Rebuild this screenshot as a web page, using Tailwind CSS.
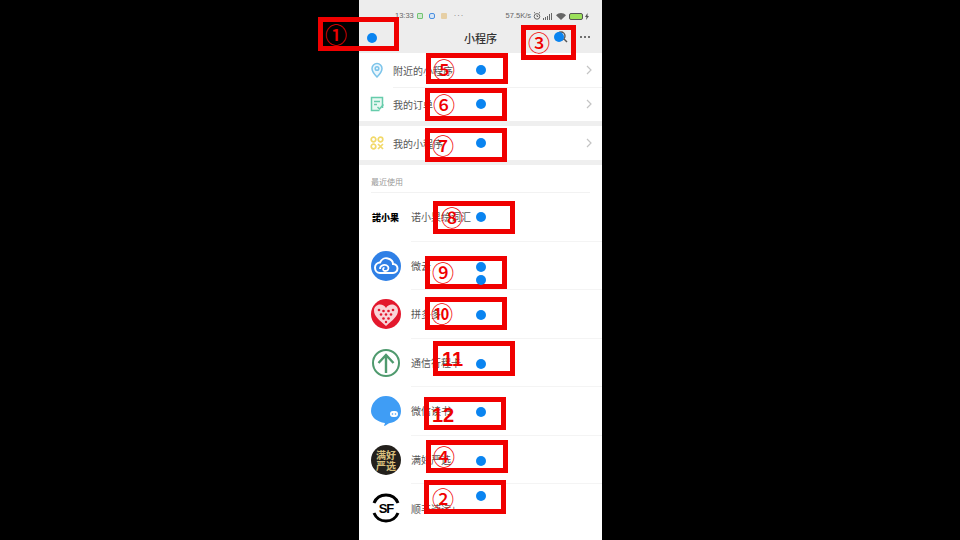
<!DOCTYPE html>
<html lang="en">
<head>
  <meta charset="UTF-8">
  <title>小程序</title>
  <script src="https://cdn.jsdelivr.net/npm/@tailwindcss/browser@4"></script>
</head>
<body class="relative w-[960px] h-[540px] overflow-hidden bg-black font-['Noto_Sans_CJK_SC',sans-serif]">

  <!-- Phone -->
  <div class="ml-[359px] w-[243px] h-[540px] bg-white flex flex-col text-[10px] text-[#555555] overflow-hidden">

    <!-- Status bar + title -->
    <div class="h-[53px] shrink-0 bg-[#ededed] flex flex-col">
      <div class="h-[25px] pl-[36px] pr-[13px] pt-[7px] flex items-center justify-between text-[7.500px] text-[#666666] font-['Liberation_Sans',sans-serif]">
        <div class="flex items-center gap-[3px]">
          <span>13:33</span>
          <span class="w-[6px] h-[6px] rounded-[1px] border-[1.500px] border-[#72c472] bg-[#cfe8cf]"></span>
          <span class="w-[6px] h-[6px] ml-[3px] rounded-[2px] border-[1.500px] border-[#4a8fe0] bg-[#d5e4f5]"></span>
          <span class="w-[6px] h-[6px] ml-[3px] rounded-[1px] bg-[#e6cfa5]"></span>
          <span class="ml-[4px] tracking-[1px]">···</span>
        </div>
        <div class="flex items-center gap-[2px]">
          <span>57.5K/s</span>
          <svg width="8" height="8" viewBox="0 0 8 8" fill="none" stroke="#666" stroke-width="1"><circle cx="4" cy="4.400" r="2.800"/><path d="M1 1 2 .4M7 1 6 .4M4 3v1.500h1.200"/></svg>
          <svg width="10" height="7" viewBox="0 0 10 7" fill="#666"><path d="M0 5h1v2H0zM2 4h1v3H2zM4 3h1v4H4zM6 1h1v6H6zM8 0h1v7H8z"/></svg>
          <svg class="ml-[1px]" width="10" height="7" viewBox="0 0 10 7" fill="#666"><path d="M0 2.200C3 -.6 7 -.6 10 2.200L5 7z"/></svg>
          <div class="ml-[1px] w-[14px] h-[7px] rounded-[2px] border border-[#555555] bg-[#9be05a]"></div>
          <svg width="4" height="7" viewBox="0 0 4 7" fill="#555"><path d="M2.500 0 0 4h1.500L1 7l3-4H2.500z"/></svg>
        </div>
      </div>
      <div class="relative flex-1 flex items-center justify-center pb-[2px] text-[11px] text-[#333333] font-medium">
        小程序
        <svg class="absolute left-[194px] top-[4px]" width="16" height="16" viewBox="0 0 16 16" fill="none" stroke="#555" stroke-width="1.400"><circle cx="8" cy="7" r="4"/><path d="m11 10 3 3"/></svg>
        <div class="absolute right-[12px] top-[11px] flex gap-[2px]">
          <span class="w-[2px] h-[2px] rounded-full bg-[#444444]"></span>
          <span class="w-[2px] h-[2px] rounded-full bg-[#444444]"></span>
          <span class="w-[2px] h-[2px] rounded-full bg-[#444444]"></span>
        </div>
      </div>
    </div>

    <!-- Menu -->
    <div class="h-[34px] shrink-0 pl-[11px] pr-[10px] flex items-center">
      <svg class="w-[14px] h-[16px] mr-[9px]" viewBox="0 0 14 16" fill="#eaf6fd" stroke="#7cc4ea" stroke-width="1.500"><path d="M7 15C4 12 2 9.500 2 6.500a5 5 0 0 1 10 0C12 9.500 10 12 7 15z"/><circle cx="7" cy="6.500" r="1.800"/></svg>
      <span class="flex-1">附近的小程序</span>
      <svg width="6" height="10" viewBox="0 0 6 10" fill="none" stroke="#c4c4c4" stroke-width="1.200"><path d="m1 1 4 4-4 4"/></svg>
    </div>
    <div class="h-[34px] shrink-0 pl-[11px] pr-[10px] flex items-center relative">
      <div class="absolute left-[34px] right-0 top-0 border-t border-[#f2f2f2]"></div>
      <svg class="w-[14px] h-[16px] mr-[9px]" viewBox="0 0 14 16" fill="#e9f8f2" stroke="#66ccab" stroke-width="1.500"><path d="M12.500 12V1.500h-11v13h8"/><path d="M4 5.500h6M4 8.500h3M7.500 11l2 2L13.500 8.500" fill="none"/></svg>
      <span class="flex-1">我的订单</span>
      <svg width="6" height="10" viewBox="0 0 6 10" fill="none" stroke="#c4c4c4" stroke-width="1.200"><path d="m1 1 4 4-4 4"/></svg>
    </div>
    <div class="h-[5px] shrink-0 bg-[#efefef]"></div>
    <div class="h-[34px] shrink-0 pl-[11px] pr-[10px] flex items-center">
      <svg class="w-[14px] h-[14px] mr-[9px]" viewBox="0 0 14 14" fill="none" stroke="#f2d96a" stroke-width="1.700"><circle cx="3.500" cy="3.500" r="2.300"/><circle cx="10.500" cy="3.500" r="2.300"/><circle cx="3.500" cy="10.500" r="2.300"/><path d="m8 8 5 5M13 8l-5 5"/></svg>
      <span class="flex-1">我的小程序</span>
      <svg width="6" height="10" viewBox="0 0 6 10" fill="none" stroke="#c4c4c4" stroke-width="1.200"><path d="m1 1 4 4-4 4"/></svg>
    </div>
    <div class="h-[5px] shrink-0 bg-[#efefef]"></div>

    <!-- Recent -->
    <div class="h-[28px] shrink-0 mx-[12px] pb-[4px] flex items-end text-[8px] text-[#999999] border-b border-[#f2f2f2]">最近使用</div>

    <div class="h-[48.500px] shrink-0 pl-[12px] flex items-center">
      <div class="w-[30px] mr-[10px] pl-[1px] text-[9px] leading-none font-black text-black whitespace-nowrap">諾小果</div>
      <span class="flex-1 h-full flex items-center border-b border-[#f4f4f4]">诺小果绘词汇</span>
    </div>
    <div class="h-[48.500px] shrink-0 pl-[12px] flex items-center">
      <svg class="mr-[10px]" width="30" height="30" viewBox="0 0 30 30"><circle cx="15" cy="15" r="15" fill="#2f80e6"/><path d="M9 22c-3 0-5-2.500-5-5.500S6.500 11.500 9 11.500C10.500 8 14 6.500 17 7.500c3 .8 5 3 5 5.500 3 0 4.500 2.200 4.500 4.500S24.500 22 22 22z" fill="none" stroke="#fff" stroke-width="2"/><path d="M9 18c0-4 5.500-5.500 8-2.500 1.500 2.500-.5 4.500-3 4.500-2 0-3-2.500-.5-3.500" fill="none" stroke="#fff" stroke-width="1.800"/></svg>
      <span class="flex-1 h-full flex items-center border-b border-[#f4f4f4]">微云</span>
    </div>
    <div class="h-[48.500px] shrink-0 pl-[12px] flex items-center">
      <svg class="mr-[10px]" width="30" height="30" viewBox="0 0 30 30"><circle cx="15" cy="15" r="15" fill="#e3182d"/><path d="M15 27C8 21 3 17 3 11.500 3 8 6 5.500 9 5.500c2.500 0 5 1.500 6 3.500 1-2 3.500-3.500 6-3.500 3 0 6 2.500 6 6C27 17 22 21 15 27z" fill="#f9d5d9"/><g fill="#e3182d"><circle cx="8" cy="11" r="1.300"/><circle cx="12.500" cy="12" r="1.300"/><circle cx="17.500" cy="12" r="1.300"/><circle cx="22" cy="11" r="1.300"/><circle cx="10" cy="15.500" r="1.300"/><circle cx="15" cy="15.500" r="1.300"/><circle cx="20" cy="15.500" r="1.300"/><circle cx="12.500" cy="19.500" r="1.300"/><circle cx="17.500" cy="19.500" r="1.300"/><circle cx="15" cy="23" r="1.200"/></g></svg>
      <span class="flex-1 h-full flex items-center border-b border-[#f4f4f4]">拼多多</span>
    </div>
    <div class="h-[48.500px] shrink-0 pl-[12px] flex items-center">
      <svg class="mr-[10px]" width="30" height="30" viewBox="0 0 30 30" fill="none" stroke="#4f9a6e" stroke-width="2"><circle cx="15" cy="15" r="13"/><path d="M15 25V7M7.500 15 15 7l7.500 8" stroke-width="2.400"/></svg>
      <span class="flex-1 h-full flex items-center border-b border-[#f4f4f4]">通信行程卡</span>
    </div>
    <div class="h-[48.500px] shrink-0 pl-[12px] flex items-center">
      <svg class="mr-[10px]" width="30" height="30" viewBox="0 0 30 30"><path d="M15 0a15 15 0 0 1 15 15c0 7-5 11-11 12-2 .500-4 2.500-6 3l1-3C6 26 0 21 0 15A15 15 0 0 1 15 0z" fill="#3f9df5"/><rect x="19" y="15" width="8" height="6" rx="3" fill="#fff"/><circle cx="21.500" cy="18" r=".8" fill="#3f9df5"/><circle cx="24.500" cy="18" r=".8" fill="#3f9df5"/></svg>
      <span class="flex-1 h-full flex items-center border-b border-[#f4f4f4]">微信读书</span>
    </div>
    <div class="h-[48.500px] shrink-0 pl-[12px] flex items-center">
      <div class="w-[30px] h-[30px] mr-[10px] shrink-0 rounded-full bg-[#23201c] text-[#d8bf7c] text-[10px] leading-[11px] font-bold flex items-center justify-center text-center">满好<br>严选</div>
      <span class="flex-1 h-full flex items-center border-b border-[#f4f4f4]">满好严选</span>
    </div>
    <div class="h-[48.500px] shrink-0 pl-[12px] flex items-center">
      <div class="relative w-[30px] h-[30px] mr-[10px] shrink-0 text-black text-[13px] leading-none font-bold tracking-[-1px] font-['Liberation_Sans',sans-serif] flex items-center justify-center">
        <svg class="absolute inset-0" width="30" height="30" viewBox="0 0 30 30" fill="none" stroke="#000" stroke-width="3"><path d="M3 10A13 13 0 0 1 27 10M27 20A13 13 0 0 1 3 20"/></svg>
        <span>S</span><span>F</span>
      </div>
      <span class="flex-1 h-full flex items-center">顺丰速运+</span>
    </div>
  </div>

  <!-- Annotations over the screenshot -->
  <div class="absolute left-[318px] top-[17px] w-[81px] h-[34px] border-[5px] border-[#f00000] text-[#f00000] text-[22px] leading-none font-medium flex items-center pl-[2px] pb-[3px]">①</div>
  <div class="absolute left-[521px] top-[25px] w-[55px] h-[35px] border-[5px] border-[#f00000] text-[#f00000] text-[22px] leading-none font-medium flex items-center pl-[2px] pb-[3px]">③</div>
  <div class="absolute left-[426px] top-[53px] w-[82px] h-[31px] border-[5px] border-[#f00000] text-[#f00000] text-[22px] leading-none font-medium flex items-center pl-[2px] pb-[1px]">⑤</div>
  <div class="absolute left-[425px] top-[88px] w-[82px] h-[33px] border-[5px] border-[#f00000] text-[#f00000] text-[22px] leading-none font-medium flex items-center pl-[3px] pb-[3px]">⑥</div>
  <div class="absolute left-[425px] top-[128px] w-[82px] h-[34px] border-[5px] border-[#f00000] text-[#f00000] text-[22px] leading-none font-medium flex items-center pl-[2px] pb-[3px]">⑦</div>
  <div class="absolute left-[433px] top-[201px] w-[82px] h-[33px] border-[5px] border-[#f00000] text-[#f00000] text-[22px] leading-none font-medium flex items-center pl-[3px] pb-[3px]">⑧</div>
  <div class="absolute left-[425px] top-[256px] w-[82px] h-[33px] border-[5px] border-[#f00000] text-[#f00000] text-[22px] leading-none font-medium flex items-center pl-[2px] pb-[3px]">⑨</div>
  <div class="absolute left-[425px] top-[297px] w-[82px] h-[33px] border-[5px] border-[#f00000] text-[#f00000] text-[22px] leading-none font-medium flex items-center pl-[1px] pb-[3px]">⑩</div>
  <div class="absolute left-[433px] top-[341px] w-[82px] h-[35px] border-[5px] border-[#f00000] text-[#f00000] text-[20px] leading-none font-bold font-['Liberation_Sans',sans-serif] flex items-center pl-[4px]">11</div>
  <div class="absolute left-[424px] top-[397px] w-[82px] h-[33px] border-[5px] border-[#f00000] text-[#f00000] text-[20px] leading-none font-bold font-['Liberation_Sans',sans-serif] flex items-center pl-[3px] pt-[2px]">12</div>
  <div class="absolute left-[426px] top-[440px] w-[82px] h-[33px] border-[5px] border-[#f00000] text-[#f00000] text-[22px] leading-none font-medium flex items-center pl-[2px] pb-[3px]">④</div>
  <div class="absolute left-[424px] top-[480px] w-[82px] h-[34px] border-[5px] border-[#f00000] text-[#f00000] text-[22px] leading-none font-medium flex items-center pl-[3px] pb-[1px]">②</div>

  <!-- Blue dots -->
  <span class="absolute left-[367px] top-[33px] w-[10px] h-[10px] rounded-full bg-[#0a84f0]"></span>
  <span class="absolute left-[554px] top-[32px] w-[10px] h-[10px] rounded-full bg-[#0a84f0]"></span>
  <span class="absolute left-[476px] top-[65px] w-[10px] h-[10px] rounded-full bg-[#0a84f0]"></span>
  <span class="absolute left-[476px] top-[99px] w-[10px] h-[10px] rounded-full bg-[#0a84f0]"></span>
  <span class="absolute left-[476px] top-[138px] w-[10px] h-[10px] rounded-full bg-[#0a84f0]"></span>
  <span class="absolute left-[476px] top-[212px] w-[10px] h-[10px] rounded-full bg-[#0a84f0]"></span>
  <span class="absolute left-[476px] top-[262px] w-[10px] h-[10px] rounded-full bg-[#0a84f0]"></span>
  <span class="absolute left-[476px] top-[275px] w-[10px] h-[10px] rounded-full bg-[#0a84f0]"></span>
  <span class="absolute left-[476px] top-[310px] w-[10px] h-[10px] rounded-full bg-[#0a84f0]"></span>
  <span class="absolute left-[476px] top-[359px] w-[10px] h-[10px] rounded-full bg-[#0a84f0]"></span>
  <span class="absolute left-[476px] top-[407px] w-[10px] h-[10px] rounded-full bg-[#0a84f0]"></span>
  <span class="absolute left-[476px] top-[456px] w-[10px] h-[10px] rounded-full bg-[#0a84f0]"></span>
  <span class="absolute left-[476px] top-[491px] w-[10px] h-[10px] rounded-full bg-[#0a84f0]"></span>
</body>
</html>
